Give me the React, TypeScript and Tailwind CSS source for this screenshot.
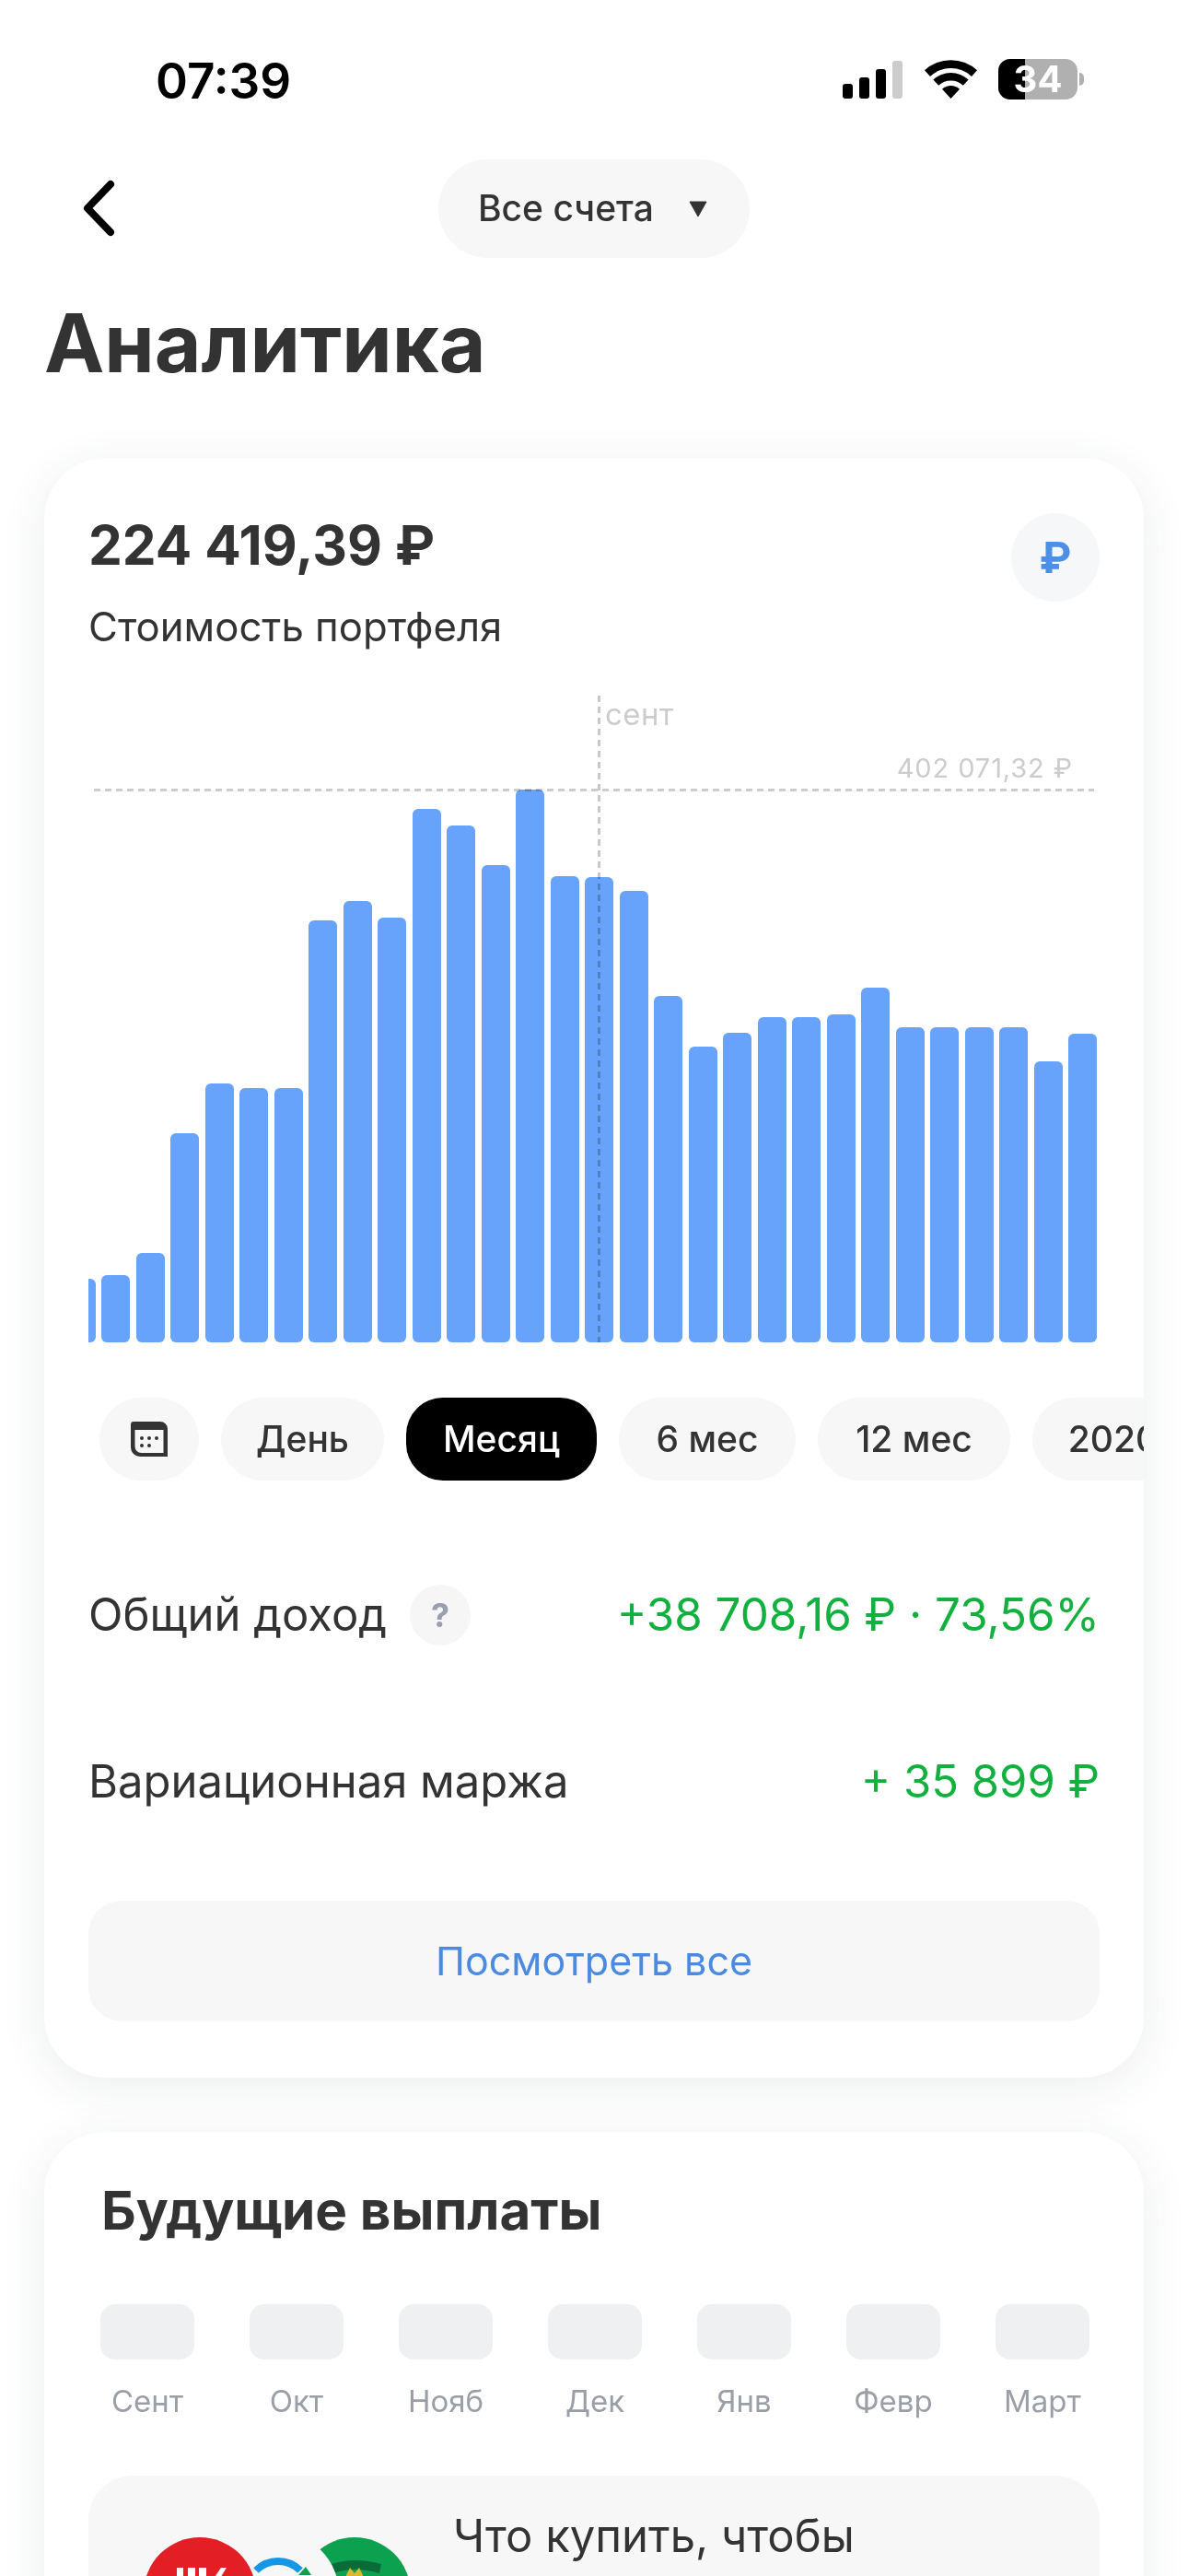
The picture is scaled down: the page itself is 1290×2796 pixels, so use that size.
const bars = [
  1378, 1370, 1320, 1052, 940, 951, 951, 576, 532, 568, 326, 363, 452, 283, 476, 478, 510, 745, 858,
  827, 792, 792, 786, 725, 815, 814, 814, 814, 890, 829,
].map((t) => Math.round((1520 - t) / 2.063));

const months = ["Сент", "Окт", "Нояб", "Дек", "Янв", "Февр", "Март"];

function StatusBar() {
  return (
    <div className="flex h-[173px] items-start justify-between pl-[169px] pr-[113px] pt-[61px]">
      <span className="text-[53px] leading-[54px] font-semibold text-black">07:39</span>
      <div className="mt-[3px] flex items-end">
        <div className="flex items-end gap-[7px]">
          <div className="h-[16px] w-[11px] rounded-[3px] bg-black" />
          <div className="h-[23px] w-[11px] rounded-[3px] bg-black" />
          <div className="h-[32px] w-[11px] rounded-[3px] bg-black" />
          <div className="h-[41px] w-[11px] rounded-[3px] bg-[#cccccc]" />
        </div>
        <svg className="ml-[24px]" width="57" height="42" viewBox="0 0 57 42">
          <path d="M0 11.3 A42 42 0 0 1 57 11.3 L51 17.9 A33 33 0 0 0 6 17.9 Z" fill="#000" />
          <path d="M9.4 21.5 A28 28 0 0 1 47.6 21.5 L41.8 27.7 A19.5 19.5 0 0 0 15.2 27.7 Z" fill="#000" />
          <path d="M19 31.8 A14 14 0 0 1 38 31.8 L28.5 42 Z" fill="#000" />
        </svg>
        <div className="mb-[-1px] ml-[23px] flex items-center gap-[2px]">
          <div className="relative flex h-[44px] w-[86px] items-center justify-center overflow-hidden rounded-[13px] bg-[#b0b0b0]">
            <div className="absolute inset-y-0 left-0 w-[29px] bg-black" />
            <span className="relative text-[40px] leading-none font-bold text-white">34</span>
          </div>
          <div className="h-[14px] w-[5px] rounded-r-full bg-[#b0b0b0]" />
        </div>
      </div>
    </div>
  );
}

function Chart() {
  return (
    <div className="relative mt-[49px] h-[702px]">
      <div className="absolute bottom-0 left-0 right-[3px] flex items-end justify-end gap-[6.5px] overflow-hidden">
        {bars.map((h, i) => (
          <div
            key={i}
            className="w-[31px] shrink-0 rounded-[6px] bg-[#67a2fb]"
            style={{ height: h }}
          />
        ))}
      </div>
      <div className="absolute left-[6px] right-[6px] top-[101px] h-[3px] bg-[repeating-linear-gradient(90deg,#cdcdcd_0_7px,transparent_7px_12px)] mix-blend-multiply" />
      <div className="absolute bottom-0 left-[553px] top-0 w-[3px] bg-[repeating-linear-gradient(180deg,#c8c8c8_0_7px,transparent_7px_12px)] mix-blend-multiply" />
      <span className="absolute left-[561px] top-[0px] text-[33px] leading-[40px] tracking-[0.5px] text-[#cccccc]">сент</span>
      <span className="absolute right-[29px] top-[61px] text-[29px] leading-[36px] tracking-[0.9px] text-[#cccccc]">
        402 071,32 ₽
      </span>
    </div>
  );
}

function ChipRow() {
  return (
    <div className="mr-[-48px] mt-[60px] flex gap-[24px] overflow-hidden pl-[12px] text-[39px] font-medium">
      <div className="flex h-[90px] w-[108px] shrink-0 items-center justify-center rounded-[45px] bg-[#f7f7f7]">
        <svg width="40" height="38" viewBox="0 0 40 38">
          <path
            d="M0 3 A3 3 0 0 1 3 0 H32 A8 8 0 0 1 40 8 V38 H10 A10 10 0 0 1 0 28 Z M4.5 9 V27 A7 7 0 0 0 11.5 34 H35.5 V9 Z"
            fill="#333"
            fillRule="evenodd"
          />
          <circle cx="12" cy="18" r="2" fill="#333" />
          <circle cx="20" cy="18" r="2" fill="#333" />
          <circle cx="28" cy="18" r="2" fill="#333" />
          <circle cx="12" cy="26" r="2" fill="#333" />
          <circle cx="20" cy="26" r="2" fill="#333" />
        </svg>
      </div>
      <div className="flex h-[90px] w-[177px] shrink-0 items-center justify-center rounded-[45px] bg-[#f7f7f7]">День</div>
      <div className="flex h-[90px] w-[207px] shrink-0 items-center justify-center rounded-[40px] bg-black text-white">Месяц</div>
      <div className="flex h-[90px] w-[192px] shrink-0 items-center justify-center rounded-[45px] bg-[#f7f7f7]">6 мес</div>
      <div className="flex h-[90px] w-[209px] shrink-0 items-center justify-center rounded-[45px] bg-[#f7f7f7]">12 мес</div>
      <div className="flex h-[90px] w-[176px] shrink-0 items-center justify-center rounded-[45px] bg-[#f7f7f7]">2020</div>
    </div>
  );
}

function Logos() {
  return (
    <svg className="ml-[56px] mt-[62px] shrink-0" width="300" height="130" viewBox="0 0 300 130">
      <circle cx="233" cy="66" r="61" fill="#0ba14f" />
      <path d="M208 34 Q233 26 262 34 L260 44 Q233 36 210 44 Z" fill="#0a6b38" />
      <path d="M224 46 L228 38 L233 44 L238 38 L242 46 L240 60 H226 Z" fill="#d9b92e" />
      <circle cx="150" cy="66" r="66" fill="#f7f7f8" />
      <path d="M126 41 A34 34 0 0 1 174 41" fill="none" stroke="#1597e5" strokeWidth="8" />
      <path d="M172 46 L180 37 L186 46 Z" fill="#0ba14f" />
      <circle cx="65" cy="66" r="61" fill="#e31e24" />
      <rect x="40" y="38" width="7" height="30" fill="#fff" />
      <rect x="52" y="38" width="8" height="30" fill="#fff" />
      <rect x="64" y="38" width="8" height="30" fill="#fff" />
      <path d="M77 54 L88 38 H94 L84 54 Z" fill="#fff" />
    </svg>
  );
}

export default function App() {
  return (
    <div className="h-[2796px] overflow-hidden bg-white font-['Inter',sans-serif] text-[#333333]">
      <StatusBar />

      {/* header */}
      <div className="relative flex h-[107px] items-center justify-center">
        <svg className="absolute left-[86px] top-[20px]" width="44" height="68" viewBox="0 0 44 68">
          <path d="M34 7 L9 33 L34 59" fill="none" stroke="#000" strokeWidth="8" strokeLinecap="round" strokeLinejoin="round" />
        </svg>
        <div className="flex h-[107px] w-[338px] items-center gap-[37px] rounded-[54px] bg-[#f7f7f7] pl-[43px]">
          <span className="text-[39px] font-medium">Все счета</span>
          <svg width="22" height="18" viewBox="0 0 22 18">
            <path d="M2 1 H20 L11 17 Z" fill="#333" stroke="#333" strokeLinejoin="round" />
          </svg>
        </div>
      </div>

      <h1 className="mt-[40px] pl-[48px] text-[87.5px] leading-[104px] font-bold">Аналитика</h1>

      {/* portfolio card */}
      <div className="mx-[48px] mt-[73px] h-[1758px] rounded-[66px] bg-white px-[48px] pt-[60px] shadow-[0_10px_50px_rgba(40,50,60,0.09)]">
        <div className="flex items-start justify-between">
          <div>
            <div className="text-[58.5px] leading-[70px] font-bold">224 419,39 ₽</div>
            <div className="mt-[29px] text-[43.7px] leading-[50px]">Стоимость портфеля</div>
          </div>
          <div className="flex h-[96px] w-[96px] items-center justify-center rounded-full bg-[#f6f7f9] text-[47px] font-bold text-[#4d8fe6]">
            ₽
          </div>
        </div>

        <Chart />
        <ChipRow />

        <div className="mt-[113px] flex h-[66px] items-center justify-between">
          <div className="flex items-center gap-[25px]">
            <span className="text-[49px]">Общий доход</span>
            <div className="flex h-[66px] w-[66px] items-center justify-center rounded-full bg-[#f6f6f7] text-[36px] font-bold text-[#9a9fb0]">
              ?
            </div>
          </div>
          <span className="text-[49.3px] text-[#12b13f]">+38 708,16 ₽ · 73,56%</span>
        </div>
        <div className="mt-[115px] flex h-[66px] items-center justify-between">
          <span className="text-[49px]">Вариационная маржа</span>
          <span className="text-[49px] text-[#12b13f]">+ 35 899 ₽</span>
        </div>

        <div className="mt-[96px] flex h-[131px] items-center justify-center rounded-[36px] bg-[#f7f7f8] text-[43px] text-[#4a8ae0]">
          Посмотреть все
        </div>
      </div>

      {/* future payments card */}
      <div className="mx-[48px] mt-[59px] rounded-[66px] bg-white pt-[50px] shadow-[0_10px_50px_rgba(40,50,60,0.09)]">
        <h2 className="pl-[62px] text-[58.3px] leading-[70px] font-bold">Будущие выплаты</h2>
        <div className="mt-[67px] flex justify-between pl-[61px] pr-[59px]">
          {months.map((m) => (
            <div key={m} className="flex w-[102px] flex-col items-center">
              <div className="h-[60px] w-[102px] rounded-[16px] bg-[#eff0f2]" />
              <span className="mt-[25px] text-[33px] leading-[40px] text-[#9a9ea6]">{m}</span>
            </div>
          ))}
        </div>
        <div className="mx-[48px] mt-[61px] flex h-[300px] rounded-[48px] bg-[#f7f7f8]">
          <Logos />
          <div className="pl-[40px] pt-[38px] text-[49px] leading-[56px]">Что купить, чтобы</div>
        </div>
      </div>
    </div>
  );
}
